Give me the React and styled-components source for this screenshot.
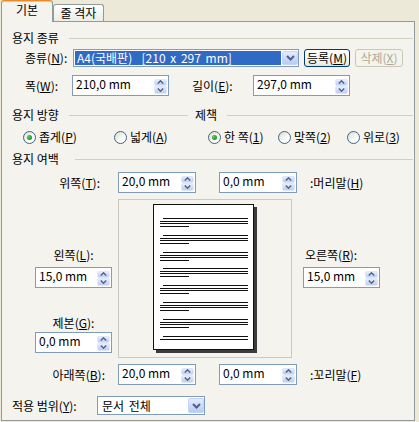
import React from 'react';
import styled, { createGlobalStyle } from 'styled-components';

const Global = createGlobalStyle`
  html, body { margin: 0; padding: 0; background: #ece9d8; }
  body {
    font-family: "Noto Sans CJK KR", "Noto Sans", sans-serif;
    font-size: 12px;
    color: #000;
  }
`;

const Window = styled.div`
  width: 419px;
  height: 422px;
  overflow: hidden;
  background: #ece9d8;
  display: flex;
  flex-direction: column;
`;

const TabStrip = styled.div`
  display: flex;
  align-items: flex-end;
  height: 21px;
  padding-left: 1px;
  flex: none;
`;

const Tab = styled.div`
  box-sizing: border-box;
  position: relative;
  z-index: ${p => (p.$active ? 2 : 1)};
  width: ${p => p.$w}px;
  height: ${p => (p.$active ? 22 : 17)}px;
  margin-bottom: ${p => (p.$active ? -1 : 0)}px;
  border: 1px solid #919b9c;
  border-bottom: none;
  border-top: ${p => (p.$active ? '1px solid #e68b2c' : '1px solid #919b9c')};
  box-shadow: ${p => (p.$active ? 'inset 0 1px 0 #ffc73c' : 'none')};
  border-radius: 3px 3px 0 0;
  background: ${p => (p.$active ? '#f4f3ee' : 'linear-gradient(#fefefe, #ecebe4)')};
  display: flex;
  align-items: center;
  justify-content: center;
  padding-bottom: ${p => (p.$active ? 3 : 0)}px;
  white-space: pre;
  line-height: 14px;
`;

const Panel = styled.div`
  box-sizing: border-box;
  margin-left: 1px;
  width: 414px;
  height: 400px;
  border: 1px solid #919b9c;
  background: #f4f3ee;
  padding: 8px 1px 0 0;
  display: flex;
  flex-direction: column;
  flex: none;
`;

const Section = styled.div`
  display: flex;
  align-items: center;
  height: 16px;
  margin-top: ${p => p.$mt || 0}px;
  padding-left: 10px;
`;

const SectionPart = styled.div`
  display: flex;
  align-items: center;
  ${p => (p.$w ? `width: ${p.$w}px; flex: none;` : 'flex: 1;')}
  margin-left: ${p => p.$ml || 0}px;
`;

const SectionTitle = styled.span`
  white-space: pre;
  line-height: 14px;
`;

const Rule = styled.div`
  flex: 1;
  height: 1px;
  background: #d0d0bf;
  margin-left: ${p => p.$gap || 10}px;
`;

const FieldRow = styled.div`
  display: flex;
  align-items: center;
  height: ${p => p.$h}px;
  margin-top: ${p => p.$mt}px;
  padding-left: ${p => p.$pl}px;
`;

const FieldLabel = styled.span`
  flex: none;
  width: ${p => p.$w}px;
  margin-left: ${p => p.$ml || 0}px;
  white-space: pre;
  line-height: 14px;
`;

const U = styled.span`
  text-decoration: underline;
  text-underline-offset: 1px;
`;

const Combo = styled.div`
  box-sizing: border-box;
  flex: none;
  width: ${p => p.$w}px;
  height: ${p => p.$h}px;
  border: 1px solid #7f9db9;
  background: #fff;
  display: flex;
  align-items: stretch;
  padding: 1px 0 1px 1px;
  gap: 1px;
`;

const ComboText = styled.div`
  flex: 1;
  display: flex;
  align-items: center;
  padding-left: ${p => p.$pl}px;
  white-space: pre;
  word-spacing: 2px;
  line-height: 14px;
  background: ${p => (p.$selected ? '#316ac5' : 'transparent')};
  color: ${p => (p.$selected ? '#fff' : '#000')};
`;

const DropButton = styled.div`
  box-sizing: border-box;
  width: 16px;
  flex: none;
  border: 1px solid #c3d3fd;
  border-radius: 2px;
  background: linear-gradient(#e4ecfd, #b8cbf5);
  display: flex;
  align-items: center;
  justify-content: center;
`;

const PushButton = styled.div`
  box-sizing: border-box;
  flex: none;
  width: ${p => p.$w}px;
  height: 18px;
  margin-left: ${p => p.$ml}px;
  border: 1px solid ${p => (p.$disabled ? '#c9c7ba' : '#003c74')};
  border-radius: 3px;
  background: ${p => (p.$disabled ? '#f5f4ea' : 'linear-gradient(#ffffff, #f0f0ea 80%, #e3e2da)')};
  color: ${p => (p.$disabled ? '#aca899' : '#000')};
  display: flex;
  align-items: center;
  justify-content: center;
  white-space: pre;
  line-height: 14px;
`;

const SpinField = styled.div`
  box-sizing: border-box;
  flex: none;
  width: ${p => p.$w}px;
  height: 21px;
  border: 1px solid #7f9db9;
  background: #fff;
  display: flex;
  align-items: center;
  padding: 0 1px 0 3px;
`;

const SpinValue = styled.span`
  flex: 1;
  white-space: pre;
  line-height: 14px;
  margin-top: -3px;
`;

const SpinButtons = styled.div`
  display: flex;
  flex-direction: column;
  width: 13px;
  height: 15px;
  margin-top: 1px;
`;

const SpinHalf = styled.div`
  box-sizing: border-box;
  flex: 1;
  border: 1px solid #dfe7fb;
  border-radius: 2px;
  background: linear-gradient(#e6edfd, #bdcdf4);
  display: flex;
  align-items: center;
  justify-content: center;
`;

const RadioRow = styled.div`
  display: flex;
  align-items: center;
  height: 16px;
  margin-top: 6px;
  padding-left: 21px;
`;

const RadioGroup = styled.div`
  display: flex;
  align-items: center;
  ${p => (p.$w ? `width: ${p.$w}px; flex: none;` : '')}
`;

const RadioItem = styled.div`
  display: flex;
  align-items: center;
  gap: 3px;
  ${p => (p.$w ? `width: ${p.$w}px; flex: none;` : '')}
  white-space: pre;
  line-height: 14px;
`;

const RadioCircle = styled.div`
  box-sizing: border-box;
  width: 13px;
  height: 13px;
  border-radius: 50%;
  border: 1px solid #3f6585;
  background: linear-gradient(135deg, #dcdad0, #ffffff 70%);
  display: flex;
  align-items: center;
  justify-content: center;
  flex: none;
`;

const RadioDot = styled.div`
  width: 5px;
  height: 5px;
  border-radius: 50%;
  background: radial-gradient(circle at 35% 35%, #55d255, #21a121 60%, #1a8a1a);
`;

const MarginGrid = styled.div`
  display: grid;
  grid-template-columns: 116px 179px 1fr;
  grid-template-rows: 21px 159px 21px;
  row-gap: 6px;
  margin-top: 5px;
`;

const SideLabel = styled.div`
  display: flex;
  align-items: center;
  justify-content: flex-end;
  padding-right: ${p => p.$pr}px;
  white-space: pre;
  line-height: 14px;
`;

const InputPair = styled.div`
  display: flex;
  justify-content: space-between;
`;

const TrailLabel = styled.div`
  display: flex;
  align-items: center;
  padding-left: 13px;
  white-space: pre;
  line-height: 14px;
`;

const SideColumn = styled.div`
  box-sizing: border-box;
  display: flex;
  flex-direction: column;
  align-items: ${p => p.$align};
  padding-left: ${p => p.$pl}px;
  width: ${p => p.$pl + 77}px;
`;

const StackLabel = styled.div`
  line-height: 14px;
  white-space: pre;
  margin-top: ${p => p.$mt}px;
  margin-bottom: ${p => p.$mb}px;
  padding-left: ${p => p.$pl || 0}px;
`;

const PreviewBox = styled.div`
  box-sizing: border-box;
  width: 174px;
  height: 159px;
  border: 1px solid #cbc9bd;
  display: flex;
  align-items: center;
  justify-content: center;
`;

const ApplyRow = styled.div`
  display: flex;
  align-items: center;
  height: 19px;
  margin-top: 11px;
  padding-left: 10px;
`;

function UpArrow() {
  return (
    <svg width="7" height="4" viewBox="0 0 7 4">
      <path d="M0.8 3.5 L3.5 0.8 L6.2 3.5" fill="none" stroke="#4d6185" strokeWidth="1.4" />
    </svg>
  );
}

function DownArrow() {
  return (
    <svg width="7" height="4" viewBox="0 0 7 4">
      <path d="M0.8 0.5 L3.5 3.2 L6.2 0.5" fill="none" stroke="#4d6185" strokeWidth="1.4" />
    </svg>
  );
}

function Chevron() {
  return (
    <svg width="9" height="6" viewBox="0 0 9 6">
      <path d="M1 1 L4.5 4.5 L8 1" fill="none" stroke="#4d6185" strokeWidth="2" />
    </svg>
  );
}

function Spin({ w, value }) {
  return (
    <SpinField $w={w}>
      <SpinValue>{value}</SpinValue>
      <SpinButtons>
        <SpinHalf><UpArrow /></SpinHalf>
        <SpinHalf><DownArrow /></SpinHalf>
      </SpinButtons>
    </SpinField>
  );
}

function Radio({ checked, w, children }) {
  return (
    <RadioItem $w={w}>
      <RadioCircle>{checked && <RadioDot />}</RadioCircle>
      <span>{children}</span>
    </RadioItem>
  );
}

const groups = [14, 31, 48, 64, 81, 98, 115, 132];

function PagePreview() {
  const lines = [];
  groups.forEach((g, i) => {
    lines.push(<rect key={`a${i}`} x="10" y={g} width="85" height="1" />);
    lines.push(<rect key={`b${i}`} x="7" y={g + 3} width="88" height="1" />);
    if (i < groups.length - 1) {
      lines.push(<rect key={`c${i}`} x="7" y={g + 5} width="88" height="1" />);
      lines.push(<rect key={`d${i}`} x="7" y={g + 8} width="29" height="1" />);
    }
  });
  return (
    <svg width="104" height="149" viewBox="0 0 104 149" shapeRendering="crispEdges">
      <rect x="3" y="3" width="101" height="146" fill="#3c3c3c" />
      <rect x="0.5" y="0.5" width="100" height="145" fill="#fff" stroke="#111" />
      <g fill="#111">{lines}</g>
    </svg>
  );
}

export default function App() {
  return (
    <>
      <Global />
      <Window>
        <TabStrip>
          <Tab $active $w={52}>기본</Tab>
          <Tab $w={51}>줄 격자</Tab>
        </TabStrip>
        <Panel>
          <Section>
            <SectionPart>
              <SectionTitle>용지 종류</SectionTitle>
              <Rule />
            </SectionPart>
          </Section>

          <FieldRow $mt={3} $h={18} $pl={23}>
            <FieldLabel $w={48}>종류(<U>N</U>):</FieldLabel>
            <Combo $w={226} $h={18}>
              <ComboText $selected $pl={2}>A4(국배판)  [210 x 297 mm]</ComboText>
              <DropButton><Chevron /></DropButton>
            </Combo>
            <PushButton $ml={5} $w={46}>등록(<U>M</U>)</PushButton>
            <PushButton $ml={5} $w={48} $disabled>삭제(<U>X</U>)</PushButton>
          </FieldRow>

          <FieldRow $mt={8} $h={21} $pl={23}>
            <FieldLabel $w={47}>폭(<U>W</U>):</FieldLabel>
            <Spin w={97} value="210,0 mm" />
            <FieldLabel $w={61} $ml={23}>길이(<U>E</U>):</FieldLabel>
            <Spin w={97} value="297,0 mm" />
          </FieldRow>

          <Section $mt={11}>
            <SectionPart $w={176}>
              <SectionTitle>용지 방향</SectionTitle>
              <Rule />
            </SectionPart>
            <SectionPart $ml={7}>
              <SectionTitle>제책</SectionTitle>
              <Rule />
            </SectionPart>
          </Section>

          <RadioRow>
            <RadioGroup $w={185}>
              <Radio checked w={91}>좁게(<U>P</U>)</Radio>
              <Radio>넓게(<U>A</U>)</Radio>
            </RadioGroup>
            <RadioGroup>
              <Radio checked w={70}>한 쪽(<U>1</U>)</Radio>
              <Radio w={69}>맞쪽(<U>2</U>)</Radio>
              <Radio>위로(<U>3</U>)</Radio>
            </RadioGroup>
          </RadioRow>

          <Section $mt={6}>
            <SectionPart>
              <SectionTitle>용지 여백</SectionTitle>
              <Rule $gap={16} />
            </SectionPart>
          </Section>

          <MarginGrid>
            <SideLabel $pr={18}>위쪽(<U>T</U>):</SideLabel>
            <InputPair>
              <Spin w={78} value="20,0 mm" />
              <Spin w={78} value="0,0 mm" />
            </InputPair>
            <TrailLabel>:머리말(<U>H</U>)</TrailLabel>

            <SideColumn $pl={33} $align="center">
              <StackLabel $mt={49} $mb={5}>왼쪽(<U>L</U>):</StackLabel>
              <Spin w={77} value="15,0 mm" />
              <StackLabel $mt={28} $mb={2}>제본(<U>G</U>):</StackLabel>
              <Spin w={77} value="0,0 mm" />
            </SideColumn>
            <PreviewBox>
              <PagePreview />
            </PreviewBox>
            <SideColumn $pl={6} $align="flex-start">
              <StackLabel $mt={49} $mb={5} $pl={2}>오른쪽(<U>R</U>):</StackLabel>
              <Spin w={77} value="15,0 mm" />
            </SideColumn>

            <SideLabel $pr={13}>아래쪽(<U>B</U>):</SideLabel>
            <InputPair>
              <Spin w={78} value="20,0 mm" />
              <Spin w={78} value="0,0 mm" />
            </InputPair>
            <TrailLabel>:꼬리말(<U>F</U>)</TrailLabel>
          </MarginGrid>

          <ApplyRow>
            <FieldLabel $w={85}>적용 범위(<U>Y</U>):</FieldLabel>
            <Combo $w={108} $h={19}>
              <ComboText $pl={3}>문서 전체</ComboText>
              <DropButton><Chevron /></DropButton>
            </Combo>
          </ApplyRow>
        </Panel>
      </Window>
    </>
  );
}
